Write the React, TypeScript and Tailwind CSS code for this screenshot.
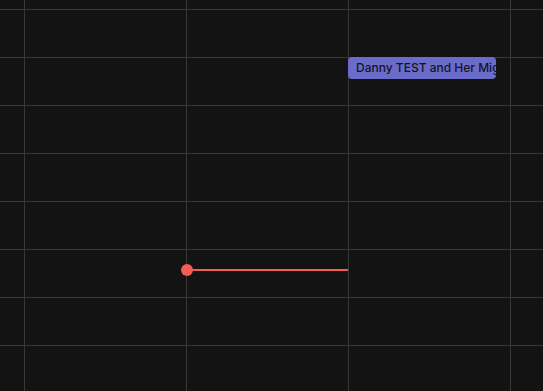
const cols = ["w-[24px]", "w-[162px]", "w-[162px]", "w-[162px]", "flex-1"];
const rows = [9, 48, 48, 48, 48, 48, 48, 48, 46];

const Cell = ({ row, col }: { row: number; col: number }) => {
  const showEvent = row === 2 && col === 3;
  const showLine = row === 6 && col === 2;
  return (
    <div
      className={`relative ${cols[col]} ${col > 0 ? "border-l border-[#393939]" : ""} ${
        row > 0 ? "border-t border-[#393939]" : ""
      }`}
    >
      {showEvent && (
        <div className="absolute left-[-1px] top-[-1px] z-10 flex h-[22px] w-[148px] items-center overflow-hidden whitespace-nowrap rounded-[4px] bg-[#6b6bc9] px-2 text-[12px] font-medium text-[#141428] [font-family:Inter,sans-serif]">
          Danny TEST and Her Mighty Team
        </div>
      )}
      {showLine && (
        <div className="absolute left-0 right-0 top-[14px] z-10 flex items-center">
          <span className="ml-[-6px] h-[12px] w-[12px] shrink-0 rounded-full bg-[#f25c54]" />
          <span className="ml-[-6px] h-[2px] flex-1 bg-[#f25c54]" />
        </div>
      )}
    </div>
  );
};

const App = () => {
  return (
    <div className="flex h-[391px] w-[543px] flex-col overflow-hidden bg-[#131313]">
      {rows.map((h, r) => (
        <div key={r} className="flex shrink-0" style={{ height: h }}>
          {cols.map((_, c) => (
            <Cell key={c} row={r} col={c} />
          ))}
        </div>
      ))}
    </div>
  );
};

export default App;
